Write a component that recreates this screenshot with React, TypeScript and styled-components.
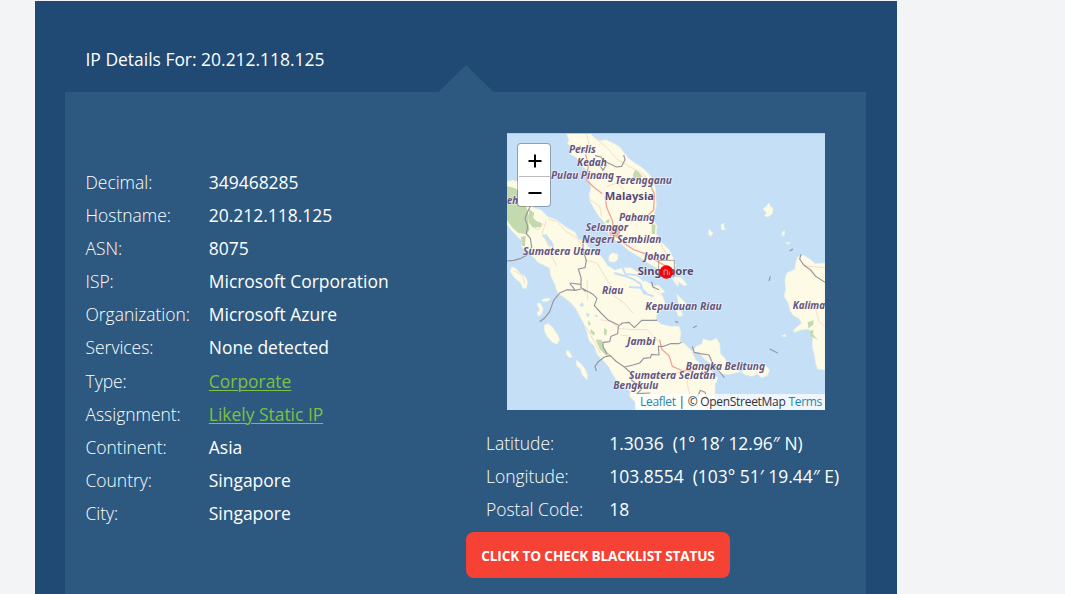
import React from 'react';
import styled, { createGlobalStyle } from 'styled-components';

const GlobalStyle = createGlobalStyle`
  * { box-sizing: border-box; }
  body {
    margin: 0;
    background: #f2f4f6;
    font-family: 'Open Sans', 'Noto Sans', sans-serif;
    overflow: hidden;
  }
`;

const Page = styled.div`
  height: 594px;
  padding: 1px 168px 0 34.5px;
  overflow: hidden;
`;

const Section = styled.main`
  display: flex;
  flex-direction: column;
  height: 593px;
  padding: 0 31px 0 30.5px;
  background: #204a73;
`;

const Title = styled.h1`
  margin: 0;
  height: 91px;
  padding: 45px 0 0 20.5px;
  font-size: 17.45px;
  font-weight: 400;
  line-height: 26px;
  color: #fff;
`;

const Panel = styled.section`
  position: relative;
  flex: 1;
  display: flex;
  justify-content: space-between;
  padding: 41px 25.5px 0 20.5px;
  background: #2d5980;
`;

const Pointer = styled.svg`
  position: absolute;
  top: -27px;
  left: 373px;
  width: 56px;
  height: 27px;
  fill: #2d5980;
`;

const Details = styled.dl`
  margin: 0;
  padding-top: 32.1px;
`;

const Row = styled.div`
  display: flex;
  height: 33.17px;
  align-items: center;
`;

const Label = styled.dt`
  width: 123.3px;
  font-size: 17.45px;
  font-weight: 300;
  color: #fff;
  white-space: nowrap;
`;

const Value = styled.dd`
  margin: 0;
  font-size: 17.45px;
  color: #fff;
  white-space: pre;
`;

const GreenLink = styled.a`
  color: #7cc142;
  text-decoration: underline;
  text-decoration-thickness: 1px;
  text-underline-offset: 2px;
`;

const Location = styled.div`
  display: flex;
  flex-direction: column;
  align-items: flex-start;
  width: 375px;
  margin-right: -25.5px;
  flex: none;
`;

const MapBox = styled.div`
  position: relative;
  flex: none;
  width: 318px;
  height: 277px;
  margin-left: 16px;
  background: #c5dff6;
  overflow: hidden;
`;

const MapArt = styled.svg`
  display: block;
  width: 318px;
  height: 277px;
`;

const ZoomControl = styled.div`
  position: absolute;
  top: 10px;
  left: 10px;
  width: 34px;
  height: 64px;
  padding: 0.5px 0 0 0.5px;
  border: 1px solid rgba(0, 0, 0, 0.28);
  border-radius: 4px;
  background: #fff;
  background-clip: padding-box;
`;

const ZoomButton = styled.div`
  display: flex;
  align-items: center;
  justify-content: center;
  height: 31px;
  padding: 2px 0 0 1px;
  & + & { border-top: 1px solid #bbb; }
`;

const Attribution = styled.div`
  position: absolute;
  right: 0;
  bottom: 0;
  width: 190px;
  height: 16px;
  padding-left: 5px;
  font-size: 12px;
  letter-spacing: -0.29px;
  line-height: 16px;
  white-space: nowrap;
  color: #333;
  background: rgba(255, 255, 255, 0.72);
`;

const MapLink = styled.a`
  color: #1c86b4;
`;

const Coordinates = styled.dl`
  margin: 16.6px 0 0 -5px;
`;

const BlacklistButton = styled.button`
  width: 264px;
  height: 46px;
  margin: 6.4px 0 0 -25px;
  padding: 0;
  border: 0;
  border-radius: 8px;
  background: #f64135;
  color: #fff;
  font: 700 13.6px 'Open Sans', sans-serif;
  letter-spacing: -0.13px;
  white-space: nowrap;
`;

const details: { label: string; value: string; link?: boolean }[] = [
  { label: 'Decimal:', value: '349468285' },
  { label: 'Hostname:', value: '20.212.118.125' },
  { label: 'ASN:', value: '8075' },
  { label: 'ISP:', value: 'Microsoft Corporation' },
  { label: 'Organization:', value: 'Microsoft Azure' },
  { label: 'Services:', value: 'None detected' },
  { label: 'Type:', value: 'Corporate', link: true },
  { label: 'Assignment:', value: 'Likely Static IP', link: true },
  { label: 'Continent:', value: 'Asia' },
  { label: 'Country:', value: 'Singapore' },
  { label: 'City:', value: 'Singapore' },
];

const coordinates = [
  { label: 'Latitude:', value: '1.3036  (1° 18′ 12.96″ N)' },
  { label: 'Longitude:', value: '103.8554  (103° 51′ 19.44″ E)' },
  { label: 'Postal Code:', value: '18' },
];

const land = [
  // Malay peninsula
  'M178 0 L186 22 182 32 192 40 188 62 206 72 218 84 226 98 240 112 238 130 250 150 252 168 246 184 250 206 262 228 276 250 292 268 302 284 304 302 318 316 340 330 362 350 388 366 410 380 430 394 450 406 466 416 482 412 500 410 506 396 498 374 486 350 470 334 456 320 448 300 450 280 440 262 442 240 448 218 446 190 446 168 438 146 426 124 408 106 386 92 364 76 352 60 338 42 322 32 296 20 280 24 262 14 248 0Z',
  // Sumatra
  'M0 146 L16 142 34 146 66 176 72 218 84 226 104 232 120 250 150 262 176 282 204 298 214 318 232 326 248 346 270 358 284 372 302 398 324 412 346 404 372 404 396 420 410 440 428 452 446 474 466 488 474 510 462 530 450 544 446 560 462 574 488 580 516 580 522 600 518 624 534 634 552 652 566 680 590 700 614 716 632 736 624 756 624 790 612 831 390 831 384 806 368 790 370 774 350 760 330 744 316 722 304 700 290 684 270 664 262 640 246 622 240 598 232 574 220 552 206 526 190 508 170 492 152 480 144 454 132 430 128 406 110 396 92 388 84 376 52 352 44 340 46 324 32 312 12 290 0 274Z',
  // Borneo
  'M954 390 L924 392 908 378 888 366 872 372 866 390 864 408 840 420 834 440 836 470 832 490 844 510 850 534 860 548 876 556 884 570 860 590 862 598 884 590 906 588 918 610 916 640 922 664 926 690 932 708 954 710Z',
  // Bangka
  'M556 656 L568 640 586 632 588 618 610 624 628 616 638 632 640 662 652 674 660 688 678 702 700 716 668 724 640 722 624 704 608 690 592 678 578 660Z',
  // Belitung
  'M704 718 L722 700 746 692 774 696 788 712 780 728 764 734 750 722 736 730 716 726Z',
  // Rupat and nearby islands
  'M306 368 L316 360 332 364 332 380 320 388 306 384Z',
  // Western chain
  'M14 402 L26 406 40 422 54 430 62 448 58 466 48 466 40 448 24 436 10 416Z',
  'M112 576 L124 572 136 582 152 606 158 620 150 634 136 628 122 612 112 594Z',
  'M90 512 L100 510 108 528 104 544 94 550 90 540 98 530Z M104 500 L116 496 130 496 124 504 108 506Z',
  'M178 652 L186 654 196 672 188 674 178 664Z M208 682 L220 690 234 708 242 728 240 740 226 726 220 708 208 696Z',
  // Riau islands
  'M504 432 L524 434 540 456 530 458 516 446 512 460 496 438Z M438 460 L454 456 474 476 462 482 444 474Z M510 484 L520 494 534 508 548 528 524 522 514 508Z M508 532 L522 534 528 548 514 550Z',
  // Natuna and Anambas
  'M768 228 L778 220 786 210 790 220 798 226 796 242 782 252 772 248 780 240Z M642 276 L652 270 650 282 656 290 644 290Z M606 290 L618 300 612 310 604 304Z M826 298 L832 292 832 306 824 308Z M836 330 l12 -2 -2 6Z M824 608 L836 604 836 612Z',
];

const forest =
  'M0 160 L24 166 54 182 66 196 58 222 66 250 64 270 68 290 58 304 34 300 16 284 0 262Z M66 228 L82 240 78 254 88 264 104 270 102 282 78 284 66 270Z M42 312 L56 308 54 340 46 340Z M378 124 L386 108 394 116 406 130 398 138 378 136Z M434 272 L446 276 444 304 434 302Z M266 620 L284 620 288 636 298 656 314 668 298 668 278 648Z M292 584 L300 592 298 608 290 602Z M252 588 L264 600 260 608 250 598Z M244 562 L252 574 244 578Z M902 568 L920 562 918 576 904 586Z M908 594 L920 590 918 604 932 620 910 608Z M298 262 L308 258 306 270 296 270Z';

const lightRoads =
  'M262 14 L300 44 330 78 366 100 410 124 430 160 M238 0 L246 30 228 60 M300 160 L330 150 352 172 M250 200 L278 220 284 250 M338 240 L360 240 M450 316 L470 348 488 384 M110 270 L96 290 82 286 M124 258 L150 266 178 296 210 314 226 340 M118 260 L106 300 128 338 134 370 150 400 M232 380 L270 390 290 424 306 450 320 488 350 508 378 540 M240 440 L242 500 M280 560 L312 566 336 586 372 590 420 590 456 626 M340 606 L370 610 366 634 M236 580 L250 604 262 626 280 660 M548 716 L540 750 552 800 M884 388 L900 400 954 404 M954 500 L926 530 936 566 954 580 M400 730 L470 728 538 712 M20 412 L48 430 52 452';

const redRoads =
  'M236 64 L244 100 238 140 260 162 286 182 M294 190 L300 226 316 262 320 300 350 330 380 350 420 364 446 382 478 400 M428 150 L442 184 440 230 424 246 M458 620 L464 648 486 668 496 700 524 712 560 714';

const water =
  'M104 306 L118 304 138 330 142 342 124 338 116 322Z M218 514 l10 -6 2 10 -8 4Z M236 540 l12 2 -6 12Z M262 548 l8 -4 2 10Z';

const rivers =
  'M322 420 L350 428 378 438 400 452 410 480 440 490 M346 404 L356 424 390 426 412 444 M366 462 L400 464 420 482';

const borders =
  'M218 38 L224 52 238 54 M264 68 L282 72 290 84 312 94 328 102 344 100 354 80 350 66 M262 88 L278 96 288 112 298 96 M70 220 L60 240 54 256 62 280 58 302 70 316 74 342 60 366 42 376 20 382 0 384 M228 324 L228 352 238 382 234 404 214 408 222 434 222 464 236 476 M188 450 L220 454 M222 468 L204 472 196 460 188 452 M204 472 L180 470 158 480 140 502 128 536 112 556 98 566 M222 464 L258 484 270 496 262 518 282 540 302 560 334 576 M334 580 L346 570 366 568 382 584 404 562 450 562 M334 580 L332 602 312 610 308 626 288 628 288 642 300 662 M268 714 L264 700 274 686 292 672 310 668 326 684 352 702 378 696 398 690 410 676 430 674 434 664 456 666 454 640 470 640 490 632 514 632 524 628 M352 702 L372 720 374 742 394 756 404 768 390 782 430 780 M434 446 L438 462 456 470 M556 640 L562 658 580 662 606 666 618 694 636 714 652 734 M504 566 l10 2 M558 584 l12 -6 M788 648 L812 660 M790 430 l-4 14 M848 354 l10 -6 M882 364 L878 378 890 396 910 410 926 430 954 448 M562 794 L572 790 580 772 594 778 600 794';

type MapLabel = { text: string; x: number; y: number; width: number; place?: boolean };

const mapLabels: MapLabel[] = [
  { text: 'Perlis', x: 186, y: 61, width: 80 },
  { text: 'Kedah', x: 210, y: 100, width: 90 },
  { text: 'Pulau Pinang', x: 132, y: 139, width: 189 },
  { text: 'Terengganu', x: 325, y: 154, width: 170 },
  { text: 'Malaysia', x: 293, y: 200, width: 148, place: true },
  { text: 'Pahang', x: 336, y: 265, width: 108 },
  { text: 'Selangor', x: 236, y: 295, width: 127 },
  { text: 'Negeri Sembilan', x: 225, y: 329, width: 238 },
  { text: 'Sumatera Utara', x: 48, y: 365, width: 233 },
  { text: 'Johor', x: 411, y: 381, width: 77 },
  { text: 'Singapore', x: 392, y: 426, width: 168, place: true },
  { text: 'Riau', x: 285, y: 484, width: 64 },
  { text: 'Kepulauan Riau', x: 415, y: 530, width: 229 },
  { text: 'Kalima', x: 857, y: 528, width: 97 },
  { text: 'Jambi', x: 360, y: 635, width: 85 },
  { text: 'Bangka Belitung', x: 536, y: 710, width: 238 },
  { text: 'Sumatera Selatan', x: 366, y: 738, width: 260 },
  { text: 'Bengkulu', x: 319, y: 767, width: 135 },
  { text: 'eh', x: 0, y: 212, width: 33 },
];

const PlaceName = styled.text<{ $place?: boolean }>`
  font-family: 'Noto Sans', 'Open Sans', sans-serif;
  font-size: ${({ $place }) => ($place ? 34 : 31)}px;
  font-weight: 700;
  font-style: ${({ $place }) => ($place ? 'normal' : 'italic')};
  fill: ${({ $place }) => ($place ? '#57486f' : '#66557d')};
  stroke: rgba(255, 255, 255, 0.6);
  stroke-width: 4px;
  stroke-linejoin: round;
  paint-order: stroke;
`;

function RegionMap() {
  return (
    <MapArt viewBox="0 0 954 831" preserveAspectRatio="none" fill="none" strokeLinejoin="round">
      <rect width="954" height="831" fill="#c5dff6" />
      <path d={land.join(' ')} fill="#fdfbe6" stroke="#eef1e2" strokeWidth="2" />
      <path d={forest} fill="#c3d9ae" />
      <path d={water} fill="#c5dff6" />
      <path d={rivers} stroke="#c5dff6" strokeWidth="6" />
      <path d={lightRoads} stroke="#f9dcc8" strokeWidth="3" />
      <path d={redRoads} stroke="#f3a595" strokeWidth="4" />
      <path d="M306 288 L330 280 340 296 334 316 308 306Z" fill="#efb5aa" />
      <path d={borders} stroke="#99959c" strokeWidth="3.5" />
      {mapLabels.map(({ text, x, y, width, place }) => (
        <PlaceName key={text} x={x} y={y} textLength={width} lengthAdjust="spacingAndGlyphs" $place={place}>
          {text}
        </PlaceName>
      ))}
      <circle cx="478" cy="417" r="20" fill="#fb0007" />
      <path d="M471 426 V411 H479 M481 426 V411 M487 426 V416" stroke="#c4a5b3" strokeWidth="3" />
      <rect x="455" y="382" width="47" height="47" stroke="#62545a" strokeOpacity=".6" strokeWidth="2.5" />
      <path d="M0 1.5 H954" stroke="#b2cbe3" strokeWidth="3" />
    </MapArt>
  );
}

export default function App() {
  return (
    <Page>
      <GlobalStyle />
      <Section>
        <Title>IP Details For: 20.212.118.125</Title>
        <Panel>
          <Pointer viewBox="0 0 56 27">
            <path d="M0.5 27 L28 0 L55.5 27 Z" />
          </Pointer>
          <Details>
            {details.map(({ label, value, link }) => (
              <Row key={label}>
                <Label>{label}</Label>
                <Value>{link ? <GreenLink>{value}</GreenLink> : value}</Value>
              </Row>
            ))}
          </Details>
          <Location>
            <MapBox>
              <RegionMap />
              <ZoomControl>
                <ZoomButton>
                  <svg width="14" height="14" viewBox="0 0 14 14" stroke="#000" strokeWidth="2">
                    <path d="M0.5 7 H13.5 M7 0.5 V13.5" />
                  </svg>
                </ZoomButton>
                <ZoomButton>
                  <svg width="14" height="14" viewBox="0 0 14 14" stroke="#000" strokeWidth="2">
                    <path d="M0.5 7 H13.5" />
                  </svg>
                </ZoomButton>
              </ZoomControl>
              <Attribution>
                <MapLink>Leaflet</MapLink> | © OpenStreetMap <MapLink>Terms</MapLink>
              </Attribution>
            </MapBox>
            <Coordinates>
              {coordinates.map(({ label, value }) => (
                <Row key={label}>
                  <Label>{label}</Label>
                  <Value>{value}</Value>
                </Row>
              ))}
            </Coordinates>
            <BlacklistButton>CLICK TO CHECK BLACKLIST STATUS</BlacklistButton>
          </Location>
        </Panel>
      </Section>
    </Page>
  );
}
